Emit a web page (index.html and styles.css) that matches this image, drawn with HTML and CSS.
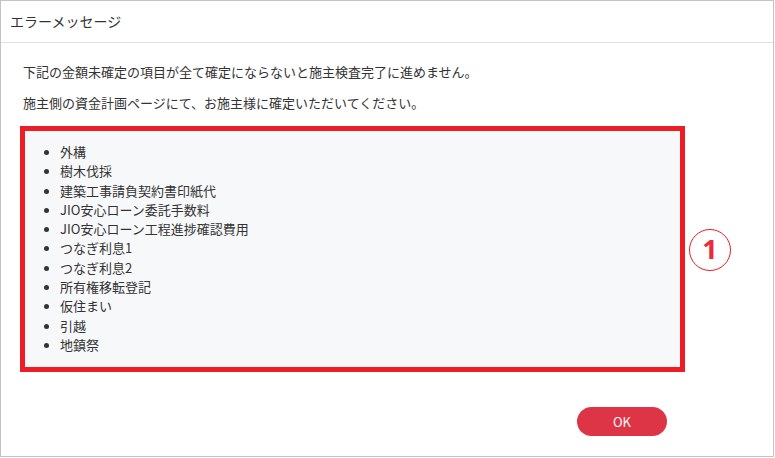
FILE: index.html
```html
<!DOCTYPE html>
<html lang="ja">
<head>
<meta charset="utf-8">
<link rel="stylesheet" href="styles.css">
</head>
<body>
<div class="dialog">
  <div class="header">
    <span class="title">エラーメッセージ</span>
  </div>
  <div class="content">
    <p class="msg msg1">下記の金額未確定の項目が全て確定にならないと施主検査完了に進めません。</p>
    <p class="msg msg2">施主側の資金計画ページにて、お施主様に確定いただいてください。</p>
    <div class="row">
      <div class="box">
        <ul class="items">
          <li>外構</li>
          <li>樹木伐採</li>
          <li>建築工事請負契約書印紙代</li>
          <li>JIO安心ローン委託手数料</li>
          <li>JIO安心ローン工程進捗確認費用</li>
          <li>つなぎ利息1</li>
          <li>つなぎ利息2</li>
          <li>所有権移転登記</li>
          <li>仮住まい</li>
          <li>引越</li>
          <li>地鎮祭</li>
        </ul>
      </div>
      <div class="circle">1</div>
    </div>
  </div>
  <div class="footer">
    <button class="ok">OK</button>
  </div>
</div>
</body>
</html>
```
FILE: styles.css
```css
* { box-sizing: border-box; }
html, body { margin: 0; padding: 0; background: #fff; }
body {
  font-family: "Noto Sans CJK JP", "Noto Sans", sans-serif;
  color: #333;
}
.dialog {
  width: 774px;
  height: 457px;
  border: 1px solid #c4c4c4;
  display: flex;
  flex-direction: column;
}
.header {
  height: 42px;
  border-bottom: 1px solid #e0e0e0;
  padding: 7px 0 0 9px;
}
.title {
  font-size: 14px;
  line-height: 20px;
  color: #333;
}
.content {
  padding: 0 0 0 19px;
}
.msg {
  margin: 0;
  font-size: 13px;
  line-height: 19px;
  padding-left: 3px;
}
.msg1 { margin-top: 19px; }
.msg2 { margin-top: 12px; }
.row {
  display: flex;
  align-items: center;
  gap: 4px;
  margin-top: 14px;
}
.box {
  width: 665px;
  height: 246px;
  border: 5px solid #ee1c25;
  background: #f7f8fa;
  padding: 11px 0 0 0;
}
.items {
  margin: 0;
  padding-left: 35px;
  font-size: 13px;
  line-height: 19.3px;
  color: #333;
}
.items li::marker { font-size: 12px; }
.circle {
  width: 42px;
  height: 42px;
  border: 1px solid #ee1c25;
  border-radius: 50%;
  color: #ee2a38;
  font-family: "Noto Sans", "DejaVu Sans", sans-serif;
  font-weight: 700;
  font-size: 27px;
  line-height: 38px;
  text-align: center;
  margin-top: 2px;
}
.footer {
  display: flex;
  justify-content: flex-end;
  padding: 35px 106px 0 0;
}
.ok {
  width: 90px;
  height: 29px;
  border: none;
  border-radius: 15px;
  background: #dd3545;
  color: #fff;
  font-family: "Noto Sans CJK JP", "Noto Sans", sans-serif;
  font-size: 13px;
  padding: 0;
}
```
